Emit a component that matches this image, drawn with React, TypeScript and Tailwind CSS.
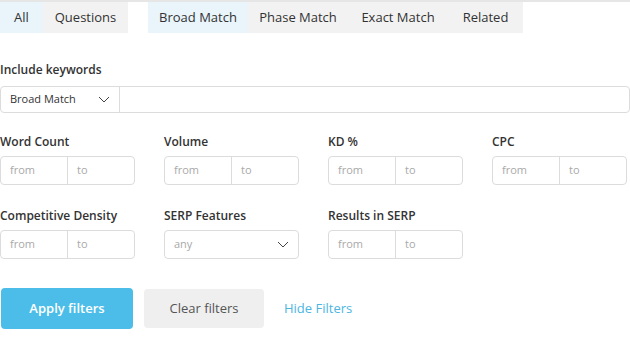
import React from 'react';

const font = { fontFamily: '"Open Sans", "Noto Sans", sans-serif' };

const Chevron: React.FC = () => (
  <svg width="12" height="7" viewBox="0 0 12 7" fill="none" className="text-[#444]">
    <path d="M1 1l5 5 5-5" stroke="currentColor" strokeWidth="1" />
  </svg>
);

const RangeInput: React.FC = () => (
  <div className="flex h-[29px] w-[135px] rounded border border-[#dcdcdc] bg-white text-[11px] text-[#a9a9a9]">
    <div className="flex w-[67px] items-center border-r border-[#dcdcdc] pl-[9px]">from</div>
    <div className="flex flex-1 items-center pl-[9px]">to</div>
  </div>
);

const Field: React.FC<{ label: string; children: React.ReactNode }> = ({ label, children }) => (
  <div className="flex w-[164px] shrink-0 flex-col gap-[6px]">
    <span className="text-[12px] font-semibold leading-[16px] text-[#333]">{label}</span>
    {children}
  </div>
);

export default function App() {
  return (
    <div style={font} className="h-[339px] w-[630px] overflow-hidden border-t-2 border-[#e6e6e6] bg-white">
      {/* tabs */}
      <div className="flex gap-[20px] text-[13px] text-[#333]">
        <div className="flex h-[31px] bg-[#f2f2f2]">
          <div className="flex w-[43px] items-center justify-center bg-[#e9f4fb]">All</div>
          <div className="flex w-[85px] items-center justify-center">Questions</div>
        </div>
        <div className="flex h-[31px] bg-[#f2f2f2]">
          <div className="flex w-[100px] items-center justify-center bg-[#e9f4fb]">Broad Match</div>
          <div className="flex w-[100px] items-center justify-center">Phase Match</div>
          <div className="flex w-[100px] items-center justify-center">Exact Match</div>
          <div className="flex w-[75px] items-center justify-center">Related</div>
        </div>
      </div>

      {/* include keywords */}
      <div className="mt-[29px] flex flex-col gap-[8px]">
        <span className="text-[12px] font-semibold leading-[16px] text-[#333]">Include keywords</span>
        <div className="flex h-[27px] w-[630px] rounded border border-[#dcdcdc]">
          <div className="flex w-[119px] items-center justify-between border-r border-[#dcdcdc] pl-[9px] pr-[9px] text-[11px] text-[#333]">
            <span>Broad Match</span>
            <Chevron />
          </div>
          <div className="flex-1" />
        </div>
      </div>

      {/* range fields */}
      <div className="mt-[21px] flex">
        <Field label="Word Count"><RangeInput /></Field>
        <Field label="Volume"><RangeInput /></Field>
        <Field label="KD %"><RangeInput /></Field>
        <Field label="CPC"><RangeInput /></Field>
      </div>
      <div className="mt-[23px] flex">
        <Field label="Competitive Density"><RangeInput /></Field>
        <Field label="SERP Features">
          <div className="flex h-[29px] w-[135px] items-center justify-between rounded border border-[#dcdcdc] pl-[9px] pr-[9px] text-[11px] text-[#a9a9a9]">
            <span>any</span>
            <Chevron />
          </div>
        </Field>
        <Field label="Results  in SERP"><RangeInput /></Field>
      </div>

      {/* buttons */}
      <div className="mt-[29px] flex items-center text-[13px]">
        <button className="ml-[1px] h-[41px] w-[132px] rounded bg-[#4bbde8] font-semibold text-white">Apply filters</button>
        <button className="ml-[11px] h-[39px] w-[120px] rounded bg-[#efefef] text-[#555]">Clear filters</button>
        <button className="ml-[20px] text-[#4bb6e2]">Hide Filters</button>
      </div>
    </div>
  );
}
